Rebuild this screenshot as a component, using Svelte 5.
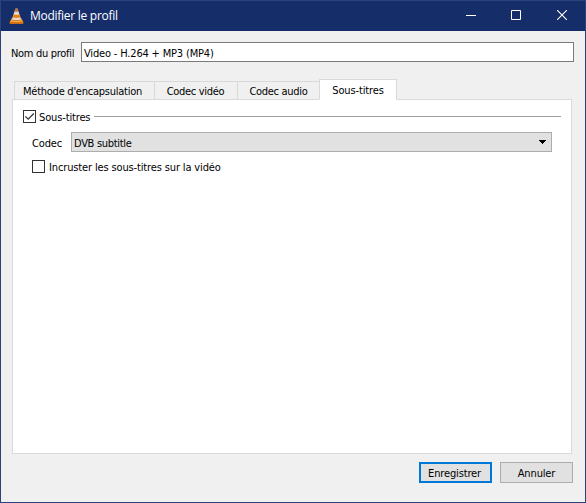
<script>
  let profileName = $state('Video - H.264 + MP3 (MP4)');
  let enabled = $state(true);
  let overlay = $state(false);
  const tabs = [
    { label: "Méthode d'encapsulation", cls: 'mux' },
    { label: 'Codec vidéo', cls: 'video' },
    { label: 'Codec audio', cls: 'audio' },
    { label: 'Sous-titres', cls: 'subs' }
  ];
  let active = $state('subs');
</script>

<main class="window">
  <header>
    <svg class="cone" width="15" height="16" viewBox="0 0 15 16">
      <path d="M2.4 10.5h10.2l1.6 3.8v.9q0 .6-.6.6H1.4q-.6 0-.6-.6v-.9z" fill="#f39a2c" />
      <path d="M.8 14.2h13.4v1q0 .6-.6.6H1.4q-.6 0-.6-.6z" fill="#c96708" />
      <path d="M6.4.7Q7.5.1 8.6.7l3.7 11.2Q11 13.4 7.5 13.4t-4.8-1.5z" fill="#dedcdc" />
      <path d="M6.4.7Q7.5.1 8.6.7l.9 2.7Q7.5 4.2 5.5 3.4z" fill="#c9703a" />
      <path d="M4.6 6.2Q7.5 7.3 10.4 6.2l1 3Q7.5 10.6 3.6 9.2z" fill="#ed8014" />
      <path d="M2.9 11.2Q7.5 13 12.1 11.2l.4 1.1Q7.5 14.4 2.5 12.3z" fill="#e57a0d" />
    </svg>
    <h1>Modifier le profil</h1>
    <div class="controls">
      <button aria-label="Réduire"><svg width="10" height="10"><path d="M0 5.5h10" stroke="#fff" /></svg></button>
      <button aria-label="Agrandir"><svg width="10" height="10"><path d="M.5.5h9v9h-9z" fill="none" stroke="#fff" /></svg></button>
      <button aria-label="Fermer"><svg width="10" height="10"><path d="M0 0l10 10M10 0L0 10" stroke="#fff" stroke-width="1.1" /></svg></button>
    </div>
  </header>

  <div class="name">
    <label for="profile">Nom du profil</label>
    <input id="profile" bind:value={profileName} spellcheck="false" />
  </div>

  <nav>
    {#each tabs as tab}
      <button class="tab {tab.cls}" class:active={active === tab.cls} onclick={() => (active = tab.cls)}>{tab.label}</button>
    {/each}
  </nav>

  <section>
    <div class="group">
      <button class="check" role="checkbox" aria-checked={enabled} aria-label="Sous-titres" onclick={() => (enabled = !enabled)}>
        {#if enabled}<svg width="11" height="11"><path d="M1.3 5.3l2.9 2.9 5.6-5.7" fill="none" stroke="#333" stroke-width="1.2" /></svg>{/if}
      </button>
      <span class="group-title">Sous-titres</span>
      <hr />
    </div>
    <div class="codec">
      <span class="codec-label">Codec</span>
      <button class="select">
        <span>DVB subtitle</span>
        <svg width="7" height="4" shape-rendering="crispEdges"><path d="M0 0h7v1H0zM1 1h5v1H1zM2 2h3v1H2zM3 3h1v1H3z" /></svg>
      </button>
    </div>
    <div class="overlay">
      <button class="check" role="checkbox" aria-checked={overlay} aria-label="Incruster" onclick={() => (overlay = !overlay)}></button>
      <span>Incruster les sous-titres sur la vidéo</span>
    </div>
  </section>

  <footer>
    <button class="save"><span>Enregistrer</span></button>
    <button class="cancel"><span>Annuler</span></button>
  </footer>
</main>

<style>
  * { box-sizing: border-box; }
  button, input { font: inherit; color: inherit; letter-spacing: inherit; border-radius: 0; margin: 0; padding: 0; outline: none; }
  .window {
    width: 586px; height: 503px;
    display: flex; flex-direction: column;
    border: 1px solid #2b427b;
    background: #f0f0f0; color: #000;
    font: 11px/14px "DejaVu Sans Condensed", "DejaVu Sans", sans-serif;
    font-stretch: condensed;
    letter-spacing: -0.14px;
    white-space: nowrap;
  }
  header { height: 30px; flex: none; display: flex; align-items: center; background: #152d69; color: #fff; padding-left: 8px; }
  .cone { flex: none; margin-top: -1px; }
  h1 { margin: 0 0 0 6px; font: 12px/16px "Open Sans", "Noto Sans", sans-serif; letter-spacing: -0.27px; }
  .controls { margin-left: auto; display: flex; height: 30px; }
  .controls button { width: 46px; border: 0; background: none; display: flex; align-items: center; justify-content: center; padding-bottom: 2px; }
  .controls button:nth-child(2) { width: 45px; padding-right: 1px; }
  .name { display: flex; align-items: center; height: 20px; flex: none; margin: 11px 11px 0 10px; }
  .name label { width: 70px; flex: none; padding-top: 3px; letter-spacing: -0.3px; }
  .name input { flex: 1; height: 20px; border: 1px solid #7a7a7a; background: #fff; padding: 3px 0 0 2px; letter-spacing: -0.17px; }
  nav { display: flex; align-items: flex-end; height: 21px; flex: none; margin: 17px 0 -1px 13px; position: relative; }
  .tab { height: 19px; border: 1px solid #d9d9d9; border-left: 0; background: #f0f0f0; line-height: 16px; padding-top: 2px; letter-spacing: -0.3px; }
  .mux { width: 141px; border-left: 1px solid #d9d9d9; padding-right: 4px; letter-spacing: -0.25px; }
  .video { width: 83px; padding-right: 1px; }
  .audio { width: 81px; border-right: 0; }
  .subs { letter-spacing: -0.14px; }
  .active { width: 78px; height: 21px; border-left: 1px solid #d9d9d9; border-bottom-color: #fff; background: #fff; padding-top: 2px; }
  section { height: 355px; flex: none; margin: 0 13px 0 11px; border: 1px solid #d9d9d9; background: #fff; padding: 10px 10px 0; }
  .check { width: 13px; height: 13px; flex: none; border: 1px solid #333; background: #fff; display: flex; }
  .check svg { display: block; }
  .group { display: flex; height: 13px; align-items: center; }
  .group-title { width: 55px; margin-left: 3px; padding-top: 3px; }
  hr { flex: 1; height: 1px; border: 0; margin: 0; background: #a0a0a0; }
  .codec { display: flex; align-items: center; height: 20px; margin: 9px 9px 0 8px; }
  .codec-label { width: 40px; padding: 3px 0 0 1px; }
  .select { flex: 1; height: 20px; border: 1px solid #adadad; background: #e1e1e1; display: flex; align-items: center; justify-content: space-between; padding: 0 5px 0 2px; }
  .select span { padding-top: 3px; letter-spacing: -0.3px; }
  .overlay { display: flex; align-items: center; height: 13px; margin: 8px 0 0 9px; gap: 4px; }
  .overlay span { padding-top: 3px; }
  footer { display: flex; justify-content: flex-end; gap: 8px; margin: 8px 12px 0 0; }
  footer button { width: 73px; height: 21px; border: 1px solid #adadad; background: #e1e1e1; padding-top: 2px; }
  footer .save { border: 2px solid #0078d7; padding-right: 2px; }
</style>
